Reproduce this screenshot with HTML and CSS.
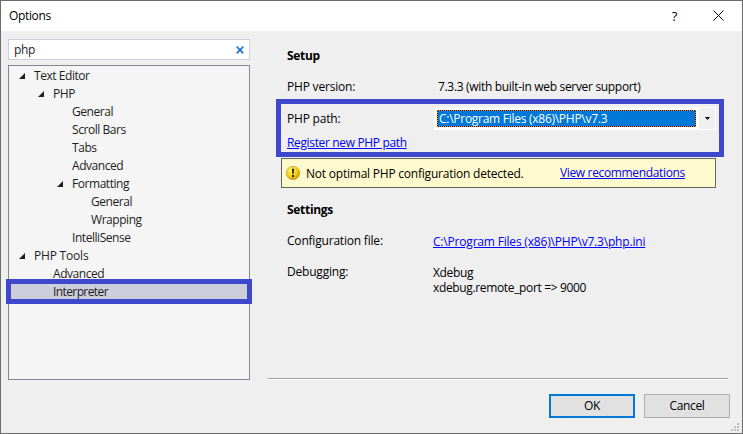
FILE: index.html
```html
<!DOCTYPE html>
<html lang="en">
<head>
<meta charset="utf-8">
<title>Options</title>
<link rel="stylesheet" href="styles.css">
</head>
<body>
<div class="window">
  <header class="titlebar">
    <span class="title">Options</span>
    <span class="help">?</span>
    <svg class="close" width="11" height="11" viewBox="0 0 11 11"><path d="M.5 .5l10 10M10.5 .5l-10 10" stroke="#111" fill="none"/></svg>
  </header>
  <main class="body">
    <aside class="sidebar">
      <div class="search"><span class="query">php</span>
        <svg width="8" height="8" viewBox="0 0 8 8"><path d="M.7 .7l6.6 6.6M7.3 .7L.7 7.3" stroke="#1c75c8" stroke-width="1.7"/></svg>
      </div>
      <div class="tree">
        <div class="node l0"><i class="arrow"></i><span>Text Editor</span></div>
        <div class="node l1"><i class="arrow"></i><span>PHP</span></div>
        <div class="node l2"><span>General</span></div>
        <div class="node l2"><span>Scroll Bars</span></div>
        <div class="node l2"><span>Tabs</span></div>
        <div class="node l2"><span>Advanced</span></div>
        <div class="node l2"><i class="arrow"></i><span>Formatting</span></div>
        <div class="node l3"><span>General</span></div>
        <div class="node l3"><span>Wrapping</span></div>
        <div class="node l2"><span>IntelliSense</span></div>
        <div class="node l0"><i class="arrow"></i><span class="tools">PHP Tools</span></div>
        <div class="node l1"><span>Advanced</span></div>
        <div class="node l1 selected"><span>Interpreter</span></div>
      </div>
    </aside>
    <section class="page">
      <h2 class="setup">Setup</h2>
      <div class="row version"><span class="label">PHP version:</span><span class="version-text">7.3.3 (with built-in web server support)</span></div>
      <div class="path-group">
        <div class="row path-row"><span class="label">PHP path:</span>
          <div class="combo"><span class="value">C:\Program Files (x86)\PHP\v7.3</span><span class="drop"><svg width="5" height="3" viewBox="0 0 5 3"><path d="M0 0h5L2.5 3z"/></svg></span></div>
        </div>
        <a class="register">Register new PHP path</a>
      </div>
      <div class="warning">
        <svg class="warn-icon" width="14" height="14" viewBox="0 0 14 14">
          <defs><radialGradient id="gold" cx=".35" cy=".3" r=".75"><stop offset="0" stop-color="#fff36b"/><stop offset=".55" stop-color="#f8d517"/><stop offset="1" stop-color="#d49a08"/></radialGradient></defs>
          <circle cx="7" cy="7" r="6.6" fill="url(#gold)" stroke="#bd8c12" stroke-width=".7"/>
          <path d="M6 2.8h2L7.6 8H6.4zM6.1 9h1.8v2H6.1z" fill="#111"/>
        </svg>
        <span class="warn-text">Not optimal PHP configuration detected.</span>
        <a class="view">View recommendations</a>
      </div>
      <h2 class="settings">Settings</h2>
      <div class="row config"><span class="label">Configuration file:</span><a class="ini">C:\Program Files (x86)\PHP\v7.3\php.ini</a></div>
      <div class="row debug"><span class="label">Debugging:</span><div class="debug-info"><div>Xdebug</div><div>xdebug.remote_port =&gt; 9000</div></div></div>
      <div class="divider"></div>
    </section>
  </main>
  <footer class="actions">
    <button class="ok">OK</button><button>Cancel</button>
    <svg class="grip" width="8" height="8" viewBox="0 0 8 8"><path d="M6 0h2v2H6zM3 3h2v2H3zM6 3h2v2H6zM0 6h2v2H0zM3 6h2v2H3zM6 6h2v2H6z" fill="#bfbfbf"/></svg>
  </footer>
</div>
</body>
</html>
```
FILE: styles.css
```css
* { box-sizing: border-box; }
body { margin: 0; font: 12px/18px "Open Sans", sans-serif; letter-spacing: -.35px; color: #000; white-space: nowrap; }
.window { width: 743px; height: 434px; border: 1px solid #6c6c6c; background: #efefef; position: relative; overflow: hidden; display: flex; flex-direction: column; }
.titlebar { height: 30px; background: #fff; display: flex; align-items: center; padding: 0 18px 0 8px; flex: none; }
.title { flex: 1; }
.help { font-size: 13px; margin-right: 36px; }
.close { margin-top: -2px; }
.body { display: flex; height: 356px; flex: none; }
.sidebar { width: 242px; margin: 8px 0 0 7px; flex: none; }
.search { height: 21px; border: 1px solid #cccedb; background: #fff; display: flex; align-items: center; justify-content: space-between; padding: 0 5px; color: #1e1e1e; }
.tree { margin-top: 5px; height: 315px; border: 1px solid #828790; background: #f5f5f5; padding-top: 1px; color: #1e1e1e; letter-spacing: -.45px; }
.tools { letter-spacing: -.2px; }
.node { height: 18px; display: flex; align-items: center; position: relative; }
.l0 { padding-left: 25px; }
.l1 { padding-left: 44px; }
.l2 { padding-left: 63px; }
.l3 { padding-left: 82px; }
.arrow { width: 6px; height: 6px; margin-left: -15px; margin-right: 9px; background: #1e1e1e; clip-path: polygon(100% 0, 100% 100%, 0 100%); }
.selected { width: 246px; height: 25px; margin: -4px 0 0 -3px; padding-left: 42px; border: 5px solid #3f48cc; background: #cccedb; letter-spacing: -.6px; }
.page { margin-left: 18px; width: 460px; display: flex; flex-direction: column; }
h2 { font-size: 12px; line-height: 18px; margin: 0 0 0 19px; letter-spacing: -.3px; }
.setup { margin-top: 16px; }
.row { display: flex; height: 18px; }
.label { width: 146px; flex: none; letter-spacing: -.2px; }
.version { margin: 13px 0 0 19px; }
.version-text { margin-left: 5px; letter-spacing: -.32px; }
.path-group { width: 448px; height: 58px; border: 5px solid #3f48cc; margin: 3px 0 0 8px; padding: 3px 3px 0 6px; }
.path-row { height: 23px; align-items: center; justify-content: space-between; }
.combo { width: 282px; height: 23px; background: #fff; padding: 3px 1px 3px 3px; display: flex; align-items: center; justify-content: space-between; }
.value { width: 259px; height: 17px; line-height: 15px; padding-left: 1px; color: #fff; background: linear-gradient(#0078d7, #0078d7) padding-box, #10151c border-box; border: 1px dotted #ff8728; letter-spacing: -.27px; }
.drop { width: 16px; height: 21px; background: #f0f0f0; display: flex; align-items: center; justify-content: center; margin: -2px 0; }
a { color: #0000ff; text-decoration: underline; }
.register { display: block; margin-top: 4px; width: 120px; }
.warning { margin: 1px 0 0 13px; width: 435px; height: 30px; border: 1px solid #646464; background: #fffacd; display: flex; align-items: center; padding-left: 4px; }
.warn-text { margin: 2px 0 0 6px; width: 254px; letter-spacing: -.22px; }
.view { margin-top: -1px; }
.settings { margin-top: 13px; }
.config { margin: 13px 0 0 19px; }
.ini { margin-top: 1px; letter-spacing: -.19px; }
.debug { margin: 13px 0 0 19px; height: 33px; }
.debug-info { line-height: 15px; padding-top: 2px; }
.divider { height: 2px; border-top: 1px solid #a0a0a0; background: #fff; margin-top: 82px; }
.actions { display: flex; gap: 9px; padding: 7px 12px 0 0; justify-content: flex-end; }
button { width: 86px; height: 24px; padding: 0; font: inherit; letter-spacing: inherit; color: #000; background: #e1e1e1; border: 1px solid #adadad; }
.ok { border: 2px solid #0078d7; }
.grip { position: absolute; right: 3px; bottom: 2px; }
```
